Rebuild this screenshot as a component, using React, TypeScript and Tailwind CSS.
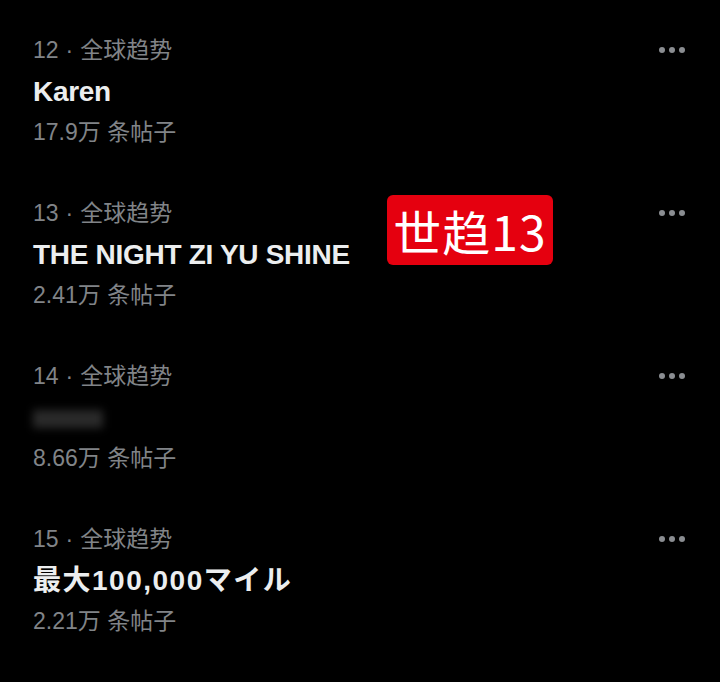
const trends = [
  { rank: 12, title: "Karen", count: "17.9万", wide: false },
  { rank: 13, title: "THE NIGHT ZI YU SHINE", count: "2.41万", wide: false },
  { rank: 14, title: "", count: "8.66万", wide: false },
  { rank: 15, title: "最大100,000マイル", count: "2.21万", wide: true },
];

function MoreDots() {
  return (
    <div className="flex items-center gap-[4px] h-[28px]">
      <span className="w-[6px] h-[6px] rounded-full bg-[#8a8d91]" />
      <span className="w-[6px] h-[6px] rounded-full bg-[#8a8d91]" />
      <span className="w-[6px] h-[6px] rounded-full bg-[#8a8d91]" />
    </div>
  );
}

export default function App() {
  return (
    <div
      className="relative w-[720px] h-[682px] bg-black overflow-hidden pt-[36px]"
      style={{ fontFamily: '"Liberation Sans", "Noto Sans CJK SC", "Noto Sans CJK JP", sans-serif' }}
    >
      {trends.map((t) => (
        <div key={t.rank} className="h-[163px] flex items-start justify-between pl-[33px] pr-[35px]">
          <div className="flex flex-col">
            <div className="text-[23px] leading-[28px] text-[#818488]">
              {t.rank}
              <span className="mx-[7px]">·</span>
              全球趋势
            </div>
            <div
              className={
                t.wide
                  ? "mt-[12px] h-[32px] text-[28px] leading-[32px] font-bold tracking-[1.5px] text-[#eceeef]"
                  : "mt-[12px] h-[32px] text-[28px] leading-[32px] font-bold tracking-[-0.3px] text-[#eceeef]"
              }
            >
              {t.title ? (
                t.title
              ) : (
                <div className="mt-[8px] w-[70px] h-[18px] bg-[#2a2a2a] blur-[4px]" />
              )}
            </div>
            <div className="mt-[10px] text-[23px] leading-[28px] text-[#818488]">
              {t.count} 条帖子
            </div>
          </div>
          <MoreDots />
        </div>
      ))}

      <div
        className="absolute left-[387px] top-[195px] w-[166px] h-[70px] rounded-[6px] bg-[#e5000f] flex items-center justify-center text-white text-[48px] leading-none tracking-[1px]"
        style={{ fontFamily: '"Noto Sans CJK SC", sans-serif' }}
      >
        世趋13
      </div>
    </div>
  );
}
